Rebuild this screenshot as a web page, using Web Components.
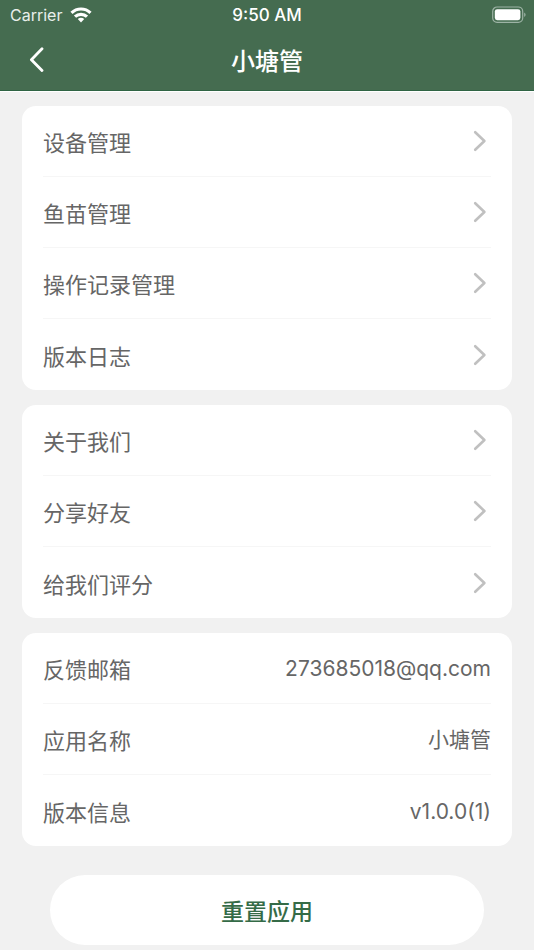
<!DOCTYPE html>
<html lang="zh-CN">
<head>
<meta charset="utf-8">
<meta name="viewport" content="width=device-width, initial-scale=1">
<title>小塘管</title>
<style>
body {
  margin: 0;
  min-height: 100vh;
  background: #f1f1f1;
  color: #666;
  font: 400 22px/30px Inter, "Noto Sans CJK SC", sans-serif;
}
main {
  display: flex;
  flex-direction: column;
  gap: 15px;
  padding: 15px 22px 0;
}
</style>
</head>
<body>
<pond-header title-text="小塘管"></pond-header>
<main>
  <pond-card>
    <pond-link href="#devices">设备管理</pond-link>
    <pond-link href="#fry">鱼苗管理</pond-link>
    <pond-link href="#records">操作记录管理</pond-link>
    <pond-link href="#changelog">版本日志</pond-link>
  </pond-card>
  <pond-card>
    <pond-link href="#about">关于我们</pond-link>
    <pond-link href="#share">分享好友</pond-link>
    <pond-link href="#rate">给我们评分</pond-link>
  </pond-card>
  <pond-card>
    <pond-info label="反馈邮箱">273685018@qq.com</pond-info>
    <pond-info label="应用名称">小塘管</pond-info>
    <pond-info label="版本信息">v1.0.0(1)</pond-info>
  </pond-card>
  <pond-reset>重置应用</pond-reset>
</main>
<script>
class PondStatus extends HTMLElement {
  constructor() {
    super();
    this.attachShadow({ mode: "open" });
    this.shadowRoot.innerHTML = `<style>
:host {
  display: grid;
  grid-template-columns: 1fr auto 1fr;
  align-items: center;
  height: 30px;
  padding: 0 8px;
  font-size: 17px;
  line-height: 20px;
}
.carrier {
  display: flex;
  align-items: center;
  gap: 7px;
  padding-left: 2px;
  color: #e9efeb;
}
.carrier span {
  font-size: 16px;
}
.time {
  font-weight: 500;
}
.battery {
  justify-self: end;
}
svg {
  display: block;
}
</style>
<div class="carrier">
  <span>Carrier</span>
  <svg width="24" height="16" viewBox="0 0 24 16" fill="none" stroke="#fff" stroke-width="3.2">
    <path d="M2.5 5.8a13.8 13.8 0 0 1 19 0M6 9.7a8.7 8.7 0 0 1 12 0"/>
    <path d="M12 15.4L8.8 12.1a4.8 4.8 0 0 1 6.4 0z" fill="#fff" stroke="none"/>
  </svg>
</div>
<span class="time">9:50 AM</span>
<svg class="battery" width="34" height="18" viewBox="0 0 34 18">
  <rect x=".7" y="1" width="30" height="15.4" rx="4.4" fill="none" stroke="#9db3a5" stroke-width="1.2"/>
  <rect x="2.8" y="3.2" width="25.6" height="11" rx="2.4" fill="#fff"/>
  <path d="M32.2 6.4a2.6 2.6 0 0 1 0 4.6z" fill="#9db3a5"/>
</svg>`;
  }
}
customElements.define("pond-status", PondStatus);

class PondHeader extends HTMLElement {
  constructor() {
    super();
    this.attachShadow({ mode: "open" });
    this.shadowRoot.innerHTML = `<style>
:host {
  display: block;
  background: #456c50;
  color: #fff;
  border-bottom: 1px solid #2f6444;
  box-shadow: 0 1px 0 #fff;
}
nav {
  display: grid;
  grid-template-columns: 48px 1fr 48px;
  align-items: center;
  height: 60px;
  padding: 0 12px;
}
button {
  display: flex;
  align-items: center;
  justify-content: center;
  height: 44px;
  padding: 0;
  border: 0;
  background: none;
  cursor: pointer;
}
h1 {
  margin: 0;
  font-family: "Noto Sans CJK SC", sans-serif;
  font-size: 24px;
  font-weight: 500;
  line-height: 32px;
  text-align: center;
}
</style>
<pond-status></pond-status>
<nav>
  <button type="button" aria-label="返回">
    <svg width="16" height="26" viewBox="0 0 16 26" fill="none" stroke="#fff" stroke-width="2.8" stroke-linecap="round" stroke-linejoin="round">
      <path d="M14 1.8L3.4 12.7L14 23.6"/>
    </svg>
  </button>
  <h1></h1>
</nav>`;
  }
  connectedCallback() {
    this.shadowRoot.querySelector("h1").textContent = this.getAttribute("title-text");
  }
}
customElements.define("pond-header", PondHeader);

class PondCard extends HTMLElement {
  constructor() {
    super();
    this.attachShadow({ mode: "open" });
    this.shadowRoot.innerHTML = `<style>
:host {
  display: block;
  padding: 0 21px;
  background: #fff;
  border-radius: 14px;
}
::slotted(:not(:last-child)) {
  border-bottom: 1px solid #f6f6f6;
}
</style>
<slot></slot>`;
  }
}
customElements.define("pond-card", PondCard);

// shared by the link rows and the label / value rows
const rowStyle = `
:host {
  display: block;
  box-sizing: border-box;
  height: 71px;
}
.row {
  display: flex;
  align-items: center;
  justify-content: space-between;
  height: 100%;
  color: inherit;
  text-decoration: none;
}
.label {
  font-family: "Noto Sans CJK SC", sans-serif;
}`;

class PondLink extends HTMLElement {
  constructor() {
    super();
    this.attachShadow({ mode: "open" });
    this.shadowRoot.innerHTML = `<style>${rowStyle}
svg {
  margin-right: 4px;
}
</style>
<a class="row">
  <span class="label"><slot></slot></span>
  <svg width="14" height="22" viewBox="0 0 14 22" fill="none" stroke="#c0c0c0" stroke-width="2.6" stroke-linecap="round" stroke-linejoin="round">
    <path d="M2.2 2.2L11.4 11l-9.2 8.8"/>
  </svg>
</a>`;
  }
  connectedCallback() {
    this.shadowRoot.querySelector("a").href = this.getAttribute("href");
  }
}
customElements.define("pond-link", PondLink);

class PondInfo extends HTMLElement {
  constructor() {
    super();
    this.attachShadow({ mode: "open" });
    this.shadowRoot.innerHTML = `<style>${rowStyle}
.value {
  padding-top: 2px;
  font-size: 21px;
}
</style>
<div class="row">
  <span class="label"></span>
  <span class="value"><slot></slot></span>
</div>`;
  }
  connectedCallback() {
    this.shadowRoot.querySelector(".label").textContent = this.getAttribute("label");
  }
}
customElements.define("pond-info", PondInfo);

class PondReset extends HTMLElement {
  constructor() {
    super();
    this.attachShadow({ mode: "open" });
    this.shadowRoot.innerHTML = `<style>
:host {
  display: block;
  padding: 14px 28px 0;
}
button {
  display: block;
  width: 100%;
  height: 70px;
  padding: 0;
  border: 0;
  border-radius: 35px;
  background: #fff;
  color: #356b47;
  font: 500 23px/30px "Noto Sans CJK SC", sans-serif;
  cursor: pointer;
}
</style>
<button type="button"><slot></slot></button>`;
  }
}
customElements.define("pond-reset", PondReset);
</script>
</body>
</html>
